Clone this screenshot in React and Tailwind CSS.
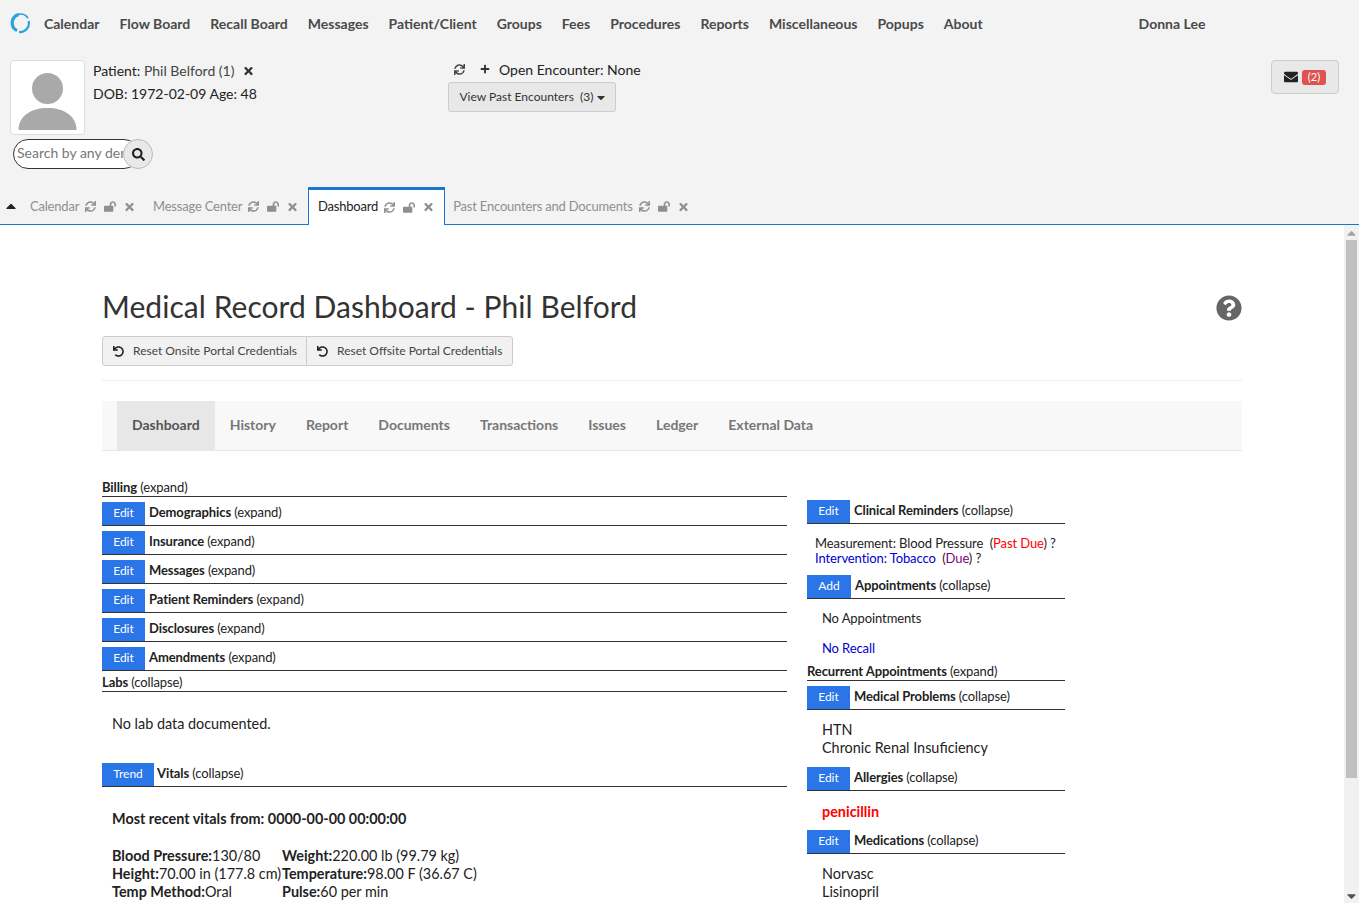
import React from "react";
import { FaSync, FaLockOpen, FaTimes, FaPlus, FaCaretDown, FaCaretUp, FaEnvelope, FaSearch, FaUndo, FaQuestionCircle } from "react-icons/fa";

const nav = ["Calendar","Flow Board","Recall Board","Messages","Patient/Client","Groups","Fees","Procedures","Reports","Miscellaneous","Popups","About"];
const subnav = ["Dashboard","History","Report","Documents","Transactions","Issues","Ledger","External Data"];

function Logo() {
  return (
    <svg width="22" height="22" viewBox="0 0 22 22" fill="none" className="block">
      <path d="M9.5 2.6 A8.6 8.6 0 0 0 8 18.6" stroke="#2ca3de" strokeWidth="3.2" />
      <path d="M9 2.4 A8.8 8.8 0 0 1 19 6.2" stroke="#2ca3de" strokeWidth="1.7" />
      <path d="M19.6 9 A8.8 8.8 0 0 1 10 20" stroke="#2ca3de" strokeWidth="2.2" />
    </svg>
  );
}

function TabIcons() {
  return (
    <span className="flex items-center text-[#8f8f8f] ml-[6px]">
      <FaSync className="w-[11px] h-[11px]" />
      <FaLockOpen className="ml-[8px] w-[12px] h-[11px]" />
      <FaTimes className="ml-[9px] w-[9px] h-[12px]" />
    </span>
  );
}

function Tab({ label, active, cls }) {
  if (active) {
    return (
      <div className="flex items-center h-[38px] border-t-[3px] border-x border-[#1976d2] bg-white pl-[9px] pr-[11px] pb-[1px] -mb-px text-[13px] tracking-[-0.2px] text-[#222]">
        {label}<TabIcons />
      </div>
    );
  }
  return (
    <div className={"flex items-center h-[37px] pt-[2px] text-[13px] tracking-[-0.2px] text-[#8f8f8f] " + cls}>
      {label}<TabIcons />
    </div>
  );
}

function Bar({ btn, btnW, gap, title, state, cls = "" }) {
  return (
    <div className={"flex items-center h-[24px] border-b border-[#333] " + cls}>
      <span className={"flex items-center justify-center h-[23px] pb-[2px] bg-[#2a75e8] text-white text-[12px] " + btnW}>{btn}</span>
      <span className={"-mt-[2px] text-[13px] tracking-[-0.1px] text-[#222] " + gap}><b>{title}</b> ({state})</span>
    </div>
  );
}

function Plain({ title, state, cls = "" }) {
  return (
    <div className={"h-[21px] flex items-end leading-[18px] border-b border-[#333] text-[13px] tracking-[-0.1px] text-[#222] " + cls}>
      <span><b>{title}</b> ({state})</span>
    </div>
  );
}

export default function App() {
  return (
    <div className="h-[903px] overflow-hidden flex flex-col bg-[#f3f3f3] text-[#222]" style={{ fontFamily: "Lato, 'Open Sans', sans-serif" }}>
      <div className="h-[50px] shrink-0 flex items-center">
        <div className="ml-[9px] mt-[-4px] w-[35px]"><Logo /></div>
        <div className="flex gap-[20px] text-[14px] font-bold text-[#4a4a4a] -mt-[4px]">
          {nav.map(n => <span key={n}>{n}</span>)}
        </div>
        <span className="ml-[156px] text-[14px] font-bold text-[#4a4a4a] -mt-[4px]">Donna Lee</span>
      </div>

      <div className="h-[137px] shrink-0 flex pt-[10px] pl-[10px]">
        <div className="w-[438px] flex flex-col">
          <div className="flex">
            <div className="w-[75px] h-[75px] bg-white border border-[#ddd] rounded-[4px] flex flex-col items-center overflow-hidden">
              <svg width="73" height="73" viewBox="0 0 73 73" className="block">
                <circle cx="36.5" cy="27.5" r="15.5" fill="#a9a9a9" />
                <path d="M7.5 69 C7.5 55 20 47 36.5 47 C53 47 65.5 55 65.5 69 Z" fill="#a9a9a9" />
              </svg>
            </div>
            <div className="ml-[8px] text-[14px] leading-[23px] -mt-[1px]">
              <div className="flex items-center"><span>Patient:&nbsp;</span><span className="text-[#444]">Phil Belford (1)</span><FaTimes className="ml-[10px] w-[9px] h-[12px] text-[#333]" /></div>
              <div>DOB: 1972-02-09 Age: 48</div>
            </div>
          </div>
          <div className="relative mt-[4px] ml-[3px] w-[140px] h-[30px]">
            <input placeholder="Search by any demographics" className="block h-[30px] w-[126px] border border-[#333] rounded-full bg-white pl-[3px] pb-[3px] text-[14px] placeholder:text-[#777] outline-none" />
            <div className="absolute left-[110px] top-0 w-[30px] h-[30px] rounded-full bg-[#e9e9e9] border border-[#bbb] flex items-center justify-center">
              <FaSearch className="w-[13px] h-[13px] text-[#222]" />
            </div>
          </div>
        </div>
        <div className="flex flex-col items-start">
          <div className="flex items-center h-[22px] pb-[4px] text-[14px] pl-[6px]">
            <FaSync className="w-[11px] h-[11px] text-[#444]" />
            <FaPlus className="ml-[15px] w-[10px] h-[10px] text-[#333]" />
            <span className="ml-[9px]">Open Encounter: None</span>
          </div>
          <div className="h-[30px] w-[168px] border border-[#ccc] rounded-[3px] bg-[#e8e8e8] flex items-center pl-[10.5px] text-[12px] text-[#333]">
            View Past Encounters&nbsp; (3)<FaCaretDown className="ml-[4px] w-[8px] h-[13px]" />
          </div>
        </div>
        <div className="ml-auto mr-[20px] w-[68px] h-[34px] border border-[#ccc] rounded-[4px] bg-[#e8e8e8] flex items-center pl-[12px]">
          <FaEnvelope className="w-[14px] h-[14px] text-[#222]" />
          <span className="ml-[4px] w-[24px] h-[15px] bg-[#dd5350] rounded-[3px] text-white text-[11px] leading-[13px] text-center">(2)</span>
        </div>
      </div>

      <div className="h-[38px] shrink-0 flex items-end border-b border-[#1976d2] pl-[6px]">
        <div className="flex items-center h-[37px] w-[24px]"><FaCaretUp className="w-[10px] h-[16px] text-[#222]" /></div>
        <Tab label="Calendar" cls="w-[123px]" />
        <Tab label="Message Center" cls="w-[155px]" />
        <Tab label="Dashboard" active />
        <Tab label="Past Encounters and Documents" cls="ml-[8px]" />
      </div>

      <div className="flex-1 min-h-0 flex bg-white">
        <div className="flex-1 min-w-0 overflow-hidden pl-[102px] pr-[102px]">
          <div className="flex items-center justify-between pt-[61px]">
            <h1 className="text-[30px] leading-[40px] tracking-[0.05px] text-[#333]">Medical Record Dashboard - Phil Belford</h1>
            <FaQuestionCircle className="mt-[4px] w-[26px] h-[26px] text-[#666]" />
          </div>
          <div className="mt-[10px] flex text-[12px] text-[#444]">
            <div className="h-[30px] w-[205px] flex items-center pl-[10px] bg-[#f1f1f1] border border-[#ccc] rounded-l-[3px]">
              <FaUndo className="w-[11px] h-[11px] text-[#222]" /><span className="ml-[9px]">Reset Onsite Portal Credentials</span>
            </div>
            <div className="h-[30px] w-[207px] -ml-px flex items-center pl-[10px] bg-[#f1f1f1] border border-[#ccc] rounded-r-[3px]">
              <FaUndo className="w-[11px] h-[11px] text-[#222]" /><span className="ml-[9px]">Reset Offsite Portal Credentials</span>
            </div>
          </div>
          <div className="mt-[14px] h-px bg-[#eee]" />
          <div className="mt-[20px] h-[50px] flex pl-[15px] bg-[#f8f8f8] border-b border-[#e7e7e7] text-[14px] font-bold text-[#777]">
            {subnav.map((s, i) => (
              <span key={s} className={"flex items-center px-[15px] pb-[2px] " + (i === 0 ? "bg-[#e7e7e7] text-[#555]" : "")}>{s}</span>
            ))}
          </div>

          <div className="flex gap-[20px] items-start">
            <div className="w-[685px] shrink-0 pt-[25px]">
              <Plain title="Billing" state="expand" />
              <Bar btn="Edit" btnW="w-[43px]" gap="ml-[4px]" title="Demographics" state="expand" cls="mt-[5px]" />
              <Bar btn="Edit" btnW="w-[43px]" gap="ml-[4px]" title="Insurance" state="expand" cls="mt-[5px]" />
              <Bar btn="Edit" btnW="w-[43px]" gap="ml-[4px]" title="Messages" state="expand" cls="mt-[5px]" />
              <Bar btn="Edit" btnW="w-[43px]" gap="ml-[4px]" title="Patient Reminders" state="expand" cls="mt-[5px]" />
              <Bar btn="Edit" btnW="w-[43px]" gap="ml-[4px]" title="Disclosures" state="expand" cls="mt-[5px]" />
              <Bar btn="Edit" btnW="w-[43px]" gap="ml-[4px]" title="Amendments" state="expand" cls="mt-[5px]" />
              <Plain title="Labs" state="collapse" />
              <div className="pl-[10px] pt-[23px] text-[14.4px] leading-[18px] h-[71px]">No lab data documented.</div>
              <Bar btn="Trend" btnW="w-[52px]" gap="ml-[3px]" title="Vitals" state="collapse" />
              <div className="pl-[10px] pt-[23px] text-[14.4px] leading-[18px]">
                <div className="font-bold">Most recent vitals from: 0000-00-00 00:00:00</div>
                <div className="mt-[19px] flex">
                  <div className="w-[170px] whitespace-nowrap">
                    <div><b>Blood Pressure:</b>130/80</div>
                    <div><b>Height:</b>70.00 in (177.8 cm)</div>
                    <div><b>Temp Method:</b>Oral</div>
                  </div>
                  <div className="whitespace-nowrap">
                    <div><b>Weight:</b>220.00 lb (99.79 kg)</div>
                    <div><b>Temperature:</b>98.00 F (36.67 C)</div>
                    <div><b>Pulse:</b>60 per min</div>
                  </div>
                </div>
              </div>
            </div>

            <div className="w-[258px] shrink-0 pt-[49px]">
              <Bar btn="Edit" btnW="w-[43px]" gap="ml-[4px]" title="Clinical Reminders" state="collapse" />
              <div className="pl-[8px] pt-[12px] text-[13px] leading-[15px] h-[51px] tracking-[-0.1px]">
                <div>Measurement: Blood Pressure&nbsp; (<span className="text-[#ff0000]">Past Due</span>) ?</div>
                <div><span className="text-[#0000cc]">Intervention: Tobacco</span>&nbsp; (<span className="text-[#800080]">Due</span>) ?</div>
              </div>
              <Bar btn="Add" btnW="w-[44px]" gap="ml-[4px]" title="Appointments" state="collapse" />
              <div className="pl-[15px] text-[13px] leading-[15px] tracking-[-0.1px]">
                <div className="pt-[12px]">No Appointments</div>
                <div className="pt-[15px] text-[#0000cc]">No Recall</div>
              </div>
              <Plain title="Recurrent Appointments" state="expand" cls="mt-[4px]" />
              <Bar btn="Edit" btnW="w-[43px]" gap="ml-[4px]" title="Medical Problems" state="collapse" cls="mt-[5px]" />
              <div className="pl-[15px] pt-[11px] text-[14.4px] leading-[18px] h-[57px]">
                <div>HTN</div>
                <div>Chronic Renal Insuficiency</div>
              </div>
              <Bar btn="Edit" btnW="w-[43px]" gap="ml-[4px]" title="Allergies" state="collapse" />
              <div className="pl-[15px] pt-[12px] text-[14.4px] leading-[18px] h-[39px] font-bold text-[#ff0000]">penicillin</div>
              <Bar btn="Edit" btnW="w-[43px]" gap="ml-[4px]" title="Medications" state="collapse" />
              <div className="pl-[15px] pt-[11px] text-[14.4px] leading-[18px]">
                <div>Norvasc</div>
                <div>Lisinopril</div>
              </div>
            </div>
          </div>
        </div>

        <div className="w-[15px] shrink-0 bg-[#f1f1f1] flex flex-col items-center">
          <div className="h-[15px] flex items-center justify-center"><FaCaretUp className="w-[9px] h-[14px] text-[#a3a3a3]" /></div>
          <div className="w-[11px] h-[538px] bg-[#c1c1c1]" />
          <div className="mt-auto h-[15px] flex items-center justify-center"><FaCaretDown className="w-[9px] h-[14px] text-[#505050]" /></div>
        </div>
      </div>
    </div>
  );
}
